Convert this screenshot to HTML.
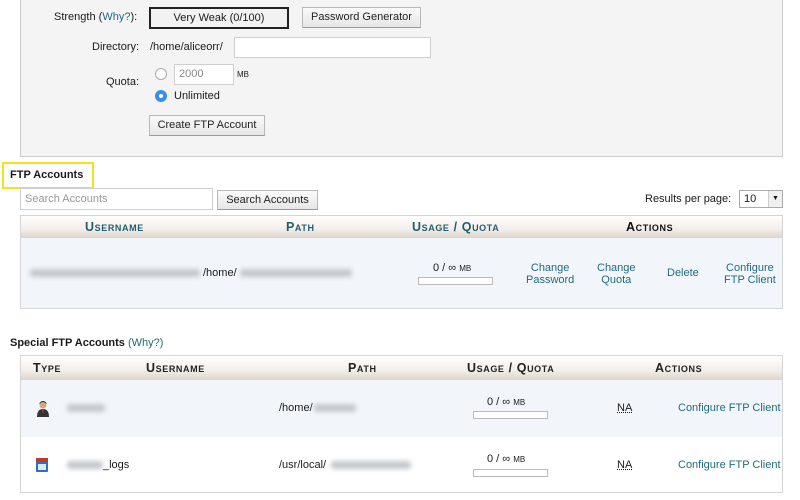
<!DOCTYPE html>
<html><head><meta charset="utf-8"><style>
*{margin:0;padding:0;box-sizing:border-box}
body{width:800px;height:500px;background:#fff;font-family:"Liberation Sans",sans-serif;font-size:11px;color:#1a1a1a;position:relative;overflow:hidden}
.a{position:absolute;white-space:nowrap}
.lnk{color:#1f6b7a}
.btn{position:absolute;background:linear-gradient(#fafafa,#e6e6e6);border:1px solid #b8b8b8;border-bottom-color:#999;text-align:center;font-size:11px;color:#222}
.inp{position:absolute;background:#fff;border:1px solid #cfcfcf}
.blur{position:absolute;background:#c4c8cc;filter:blur(2.5px);height:8px;border-radius:3px}
.hdr{position:absolute;background:linear-gradient(#ffffff,#f3eeea 60%,#ddd3cb);}
.sc{font-weight:bold;font-variant:small-caps;letter-spacing:.6px;font-size:12.5px}
.bar{position:absolute;width:75px;height:8px;border:1px solid #bbb;background:#fff}
.na{position:absolute;text-decoration:underline dotted;font-size:11px}
</style></head><body>
<div class="a" style="left:20px;top:-2px;width:763px;height:159px;background:#f4f4f4;border:1px solid #ccc"></div>
<div class="a" style="left:54px;top:11px">Strength (<span class="lnk">Why?</span>):</div>
<div class="a" style="left:149px;top:7px;width:140px;height:22px;border:2px solid #222;background:#f2f2f2;text-align:center;line-height:18px">Very Weak (0/100)</div>
<div class="btn" style="left:302px;top:7px;width:119px;height:21px;line-height:19px">Password Generator</div>
<div class="a" style="left:92px;top:41px">Directory:</div>
<div class="a" style="left:150px;top:41px">/home/aliceorr/</div>
<div class="inp" style="left:234px;top:37px;width:197px;height:21px"></div>
<div class="a" style="left:106px;top:76px">Quota:</div>
<div class="a" style="left:155px;top:68px;width:12px;height:12px;border:1px solid #aaa;border-radius:50%;background:#fff"></div>
<div class="inp" style="left:174px;top:64px;width:60px;height:21px;color:#888;padding:3px 0 0 4px">2000</div>
<div class="a" style="left:237px;top:70px;font-size:8px">MB</div>
<div class="a" style="left:155px;top:90px;width:12px;height:12px;border-radius:50%;background:#3a8ee6"><div style="position:absolute;left:4px;top:4px;width:4px;height:4px;border-radius:50%;background:#fff"></div></div>
<div class="a" style="left:174px;top:90px">Unlimited</div>
<div class="btn" style="left:149px;top:115px;width:116px;height:21px;line-height:19px">Create FTP Account</div>

<div class="a" style="left:2px;top:162px;width:92px;height:27px;border:2px solid #f3e21c"></div>
<div class="a" style="left:10px;top:169px;font-weight:bold">FTP Accounts</div>
<div class="inp" style="left:20px;top:188px;width:193px;height:22px;color:#999;padding:4px 0 0 4px">Search Accounts</div>
<div class="btn" style="left:217px;top:190px;width:101px;height:20px;line-height:18px">Search Accounts</div>
<div class="a" style="left:645px;top:193px">Results per page:</div>
<div class="inp" style="left:739px;top:190px;width:44px;height:18px;border-color:#aaa;padding:2px 0 0 4px">10<span style="position:absolute;right:0;top:0;width:14px;height:16px;border-left:1px solid #ccc;background:#f0f0f0;font-size:7px;text-align:center;line-height:16px">▼</span></div>

<div class="a" style="left:20px;top:215px;width:763px;height:94px;border:1px solid #d4d4d4;background:#f2f6fb"></div>
<div class="hdr" style="left:21px;top:216px;width:761px;height:22px"></div>
<div class="a sc" style="left:85px;top:220px;color:#1f5e6e">Username</div>
<div class="a sc" style="left:286px;top:220px;color:#1f5e6e">Path</div>
<div class="a sc" style="left:412px;top:220px;color:#1f5e6e">Usage / Quota</div>
<div class="a sc" style="left:626px;top:220px;color:#111">Actions</div>
<div class="blur" style="left:30px;top:269px;width:170px"></div>
<div class="a" style="left:203px;top:267px">/home/</div>
<div class="blur" style="left:240px;top:269px;width:112px"></div>
<div class="a" style="left:433px;top:262px">0 / ∞ <span style="font-size:8px">MB</span></div>
<div class="bar" style="left:418px;top:277px"></div>
<div class="a lnk" style="left:526px;top:262px;text-align:center;line-height:12px">Change<br>Password</div>
<div class="a lnk" style="left:597px;top:262px;text-align:center;line-height:12px">Change<br>Quota</div>
<div class="a lnk" style="left:667px;top:267px">Delete</div>
<div class="a lnk" style="left:724px;top:262px;text-align:center;line-height:12px">Configure<br>FTP Client</div>

<div class="a" style="left:10px;top:337px;font-weight:bold">Special FTP Accounts <span class="lnk" style="font-weight:normal">(Why?)</span></div>
<div class="a" style="left:20px;top:355px;width:763px;height:138px;border:1px solid #d4d4d4;background:#fff"></div>
<div class="a" style="left:21px;top:380px;width:761px;height:57px;background:#f2f6fb"></div>
<div class="hdr" style="left:21px;top:356px;width:761px;height:24px"></div>
<div class="a sc" style="left:33px;top:361px;color:#222">Type</div>
<div class="a sc" style="left:146px;top:361px;color:#222">Username</div>
<div class="a sc" style="left:348px;top:361px;color:#222">Path</div>
<div class="a sc" style="left:467px;top:361px;color:#222">Usage / Quota</div>
<div class="a sc" style="left:655px;top:361px;color:#222">Actions</div>
<svg class="a" style="left:36px;top:400px" width="14" height="17" viewBox="0 0 14 17"><circle cx="7" cy="5" r="3.5" fill="#d9a57a"/><path d="M3.5 4 Q7 0 10.5 4 L10.5 3 Q7 -1 3.5 3Z" fill="#222"/><path d="M1 17 Q1 9 7 9 Q13 9 13 17Z" fill="#333"/><path d="M6 9 L7 14 L8 9Z" fill="#c33"/></svg>
<div class="blur" style="left:67px;top:404px;width:38px"></div>
<div class="a" style="left:279px;top:402px">/home/</div>
<div class="blur" style="left:314px;top:404px;width:42px"></div>
<div class="a" style="left:487px;top:396px">0 / ∞ <span style="font-size:8px">MB</span></div>
<div class="bar" style="left:473px;top:411px"></div>
<div class="na" style="left:617px;top:402px">NA</div>
<div class="a lnk" style="left:678px;top:402px">Configure FTP Client</div>
<svg class="a" style="left:36px;top:458px" width="12" height="14" viewBox="0 0 12 14"><rect x="0" y="0" width="12" height="14" rx="1" fill="#2f6fc0"/><rect x="0" y="0" width="12" height="4" fill="#c0392b"/><rect x="2" y="6" width="8" height="6" fill="#dbe8f8"/></svg>
<div class="blur" style="left:67px;top:461px;width:36px"></div>
<div class="a" style="left:103px;top:459px">_logs</div>
<div class="a" style="left:279px;top:459px">/usr/local/</div>
<div class="blur" style="left:331px;top:461px;width:80px"></div>
<div class="a" style="left:487px;top:453px">0 / ∞ <span style="font-size:8px">MB</span></div>
<div class="bar" style="left:473px;top:469px"></div>
<div class="na" style="left:617px;top:459px">NA</div>
<div class="a lnk" style="left:678px;top:459px">Configure FTP Client</div>
</body></html>
